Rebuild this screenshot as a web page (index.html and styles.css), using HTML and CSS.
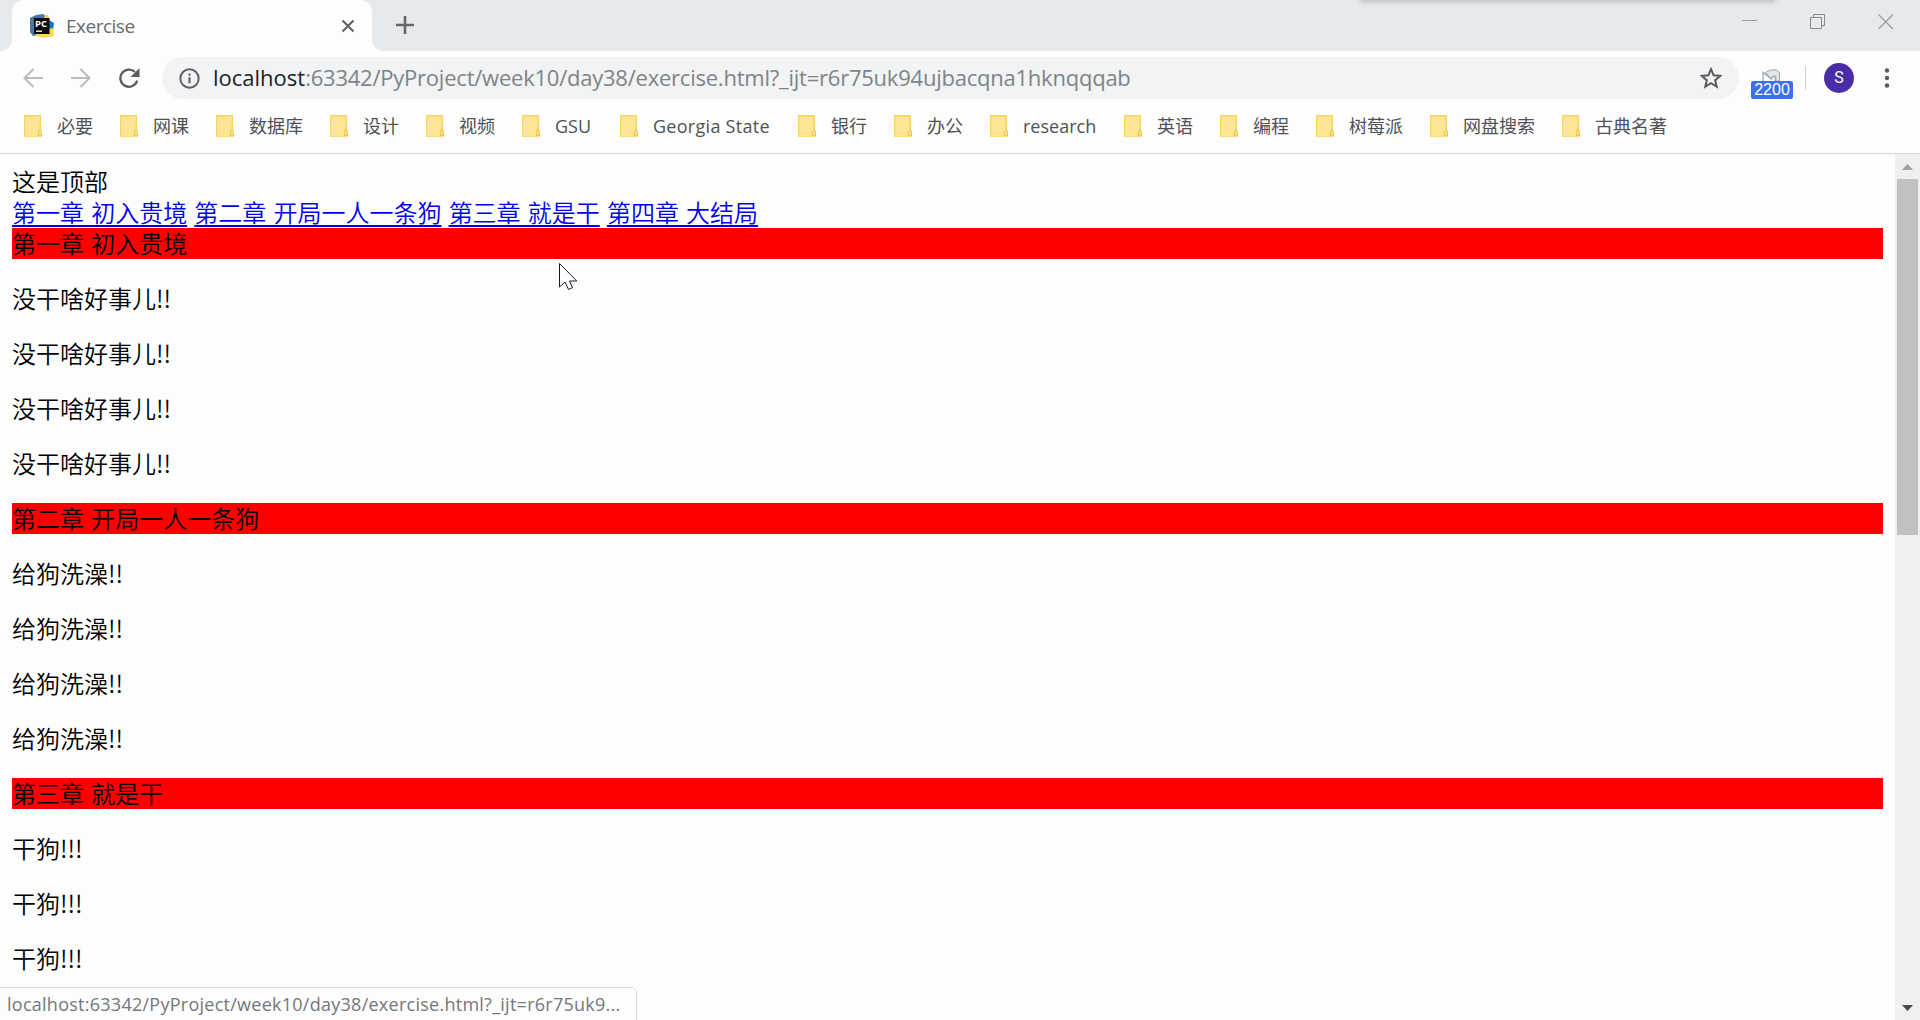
FILE: index.html
```html
<!DOCTYPE html>
<html lang="zh-CN">
<head>
<meta charset="utf-8">
<title>Exercise</title>
<link rel="stylesheet" href="styles.css">
</head>
<body>
<div class="browser">
  <header class="tabstrip">
    <div class="tab">
      <svg class="favicon" viewBox="0 0 24 24" width="24" height="24">
        <path d="M0 4L6 1L13 0L17 3L20 9L14 20L3 22L0 18Z" fill="#4a78a5"/>
        <path d="M14 3L18 0L19 5L15 7Z" fill="#f9d24c"/>
        <path d="M19 6L24 9L23 17L18 18Z" fill="#0c78c8"/>
        <path d="M18 15L23 14L24 22L14 24L6 22L5 19Z" fill="#fcd84a"/>
        <rect x="4" y="4" width="15.500" height="16" fill="#0b0b0d"/>
        <path d="M6 17.200h6" stroke="#fff" stroke-width="1.3"/>
        <text class="favicon-text" x="5" y="12.800">PC</text>
      </svg>
      <span class="tab-title">Exercise</span>
      <svg class="tab-close" viewBox="0 0 14 14" width="14" height="14"><path d="M1.5 1.5L12.5 12.5M12.5 1.5L1.5 12.5" stroke="#5f6068" stroke-width="2"/></svg>
    </div>
    <svg class="new-tab" viewBox="0 0 18 18" width="18" height="18"><path d="M9 0V18M0 9H18" stroke="#67676c" stroke-width="2.6"/></svg>
    <div class="window-controls">
      <svg viewBox="0 0 16 16" width="16" height="16"><path d="M0 6.5H15" stroke="#9a9a9a"/></svg>
      <svg viewBox="0 0 16 16" width="16" height="16" fill="none" stroke="#8a8a8a"><path d="M.5 3.5H11.500V14.500H.5ZM3.500 3.500V.5H14.500V11.500H11.500"/></svg>
      <svg viewBox="0 0 16 16" width="16" height="16"><path d="M.5 .5L15 15M15 .5L.5 15" stroke="#9a9a9a" stroke-width="1.1"/></svg>
    </div>
    <div class="top-shadow"></div>
  </header>
  <nav class="toolbar">
    <svg class="nav-icon" viewBox="0 0 20 20" width="20" height="20" fill="none" stroke="#bcbcbe" stroke-width="2.100"><path d="M20 10H1.500M10.500 1L1.500 10L10.500 19"/></svg>
    <svg class="nav-icon" viewBox="0 0 20 20" width="20" height="20" fill="none" stroke="#bcbcbe" stroke-width="2.100"><path d="M0 10H18.500M9.500 1L18.500 10L9.500 19"/></svg>
    <svg class="nav-icon reload" viewBox="0 0 22 20" width="22" height="20"><path d="M18.200 12.700A8.600 8.600 0 1 1 16 4" fill="none" stroke="#5b5b60" stroke-width="2.300"/><path d="M20.500 0V9H11.500Z" fill="#5b5b60"/></svg>
    <div class="omnibox">
      <svg viewBox="0 0 22 22" width="21" height="21"><circle cx="11" cy="11" r="9.600" fill="none" stroke="#5f6068" stroke-width="2.100"/><path d="M11 9.800V16M11 5.800V8" stroke="#5f6068" stroke-width="2.200"/></svg>
      <span class="url"><span class="host">localhost</span>:63342/PyProject/week10/day38/exercise.html?_ijt=r6r75uk94ujbacqna1hknqqqab</span>
      <svg class="star" viewBox="0 0 22 22" width="22" height="22"><path d="M11 2.200L13.600 8.300L20.200 8.900L15.200 13.200L16.700 19.700L11 16.200L5.300 19.700L6.800 13.200L1.800 8.900L8.400 8.300Z" fill="none" stroke="#5b5b60" stroke-width="2"/></svg>
    </div>
    <div class="extension">
      <svg viewBox="0 0 20 12" width="20" height="12"><path d="M3.500 3.500C8 0 17.500-.5 17.500 5V12H13C14 7 12 5.500 9 9.500Z" fill="#e3e8ea" stroke="#97a1a5"/><path d="M1 12V3.500L9.500 10C12 5.500 15 6 13.500 12" fill="none" stroke="#9aa3a6" stroke-width="1.200"/></svg>
      <span class="badge">2200</span>
    </div>
    <div class="divider"></div>
    <div class="avatar">S</div>
    <svg class="menu" viewBox="0 0 6 20" width="6" height="20" fill="#5b5b60"><circle cx="3" cy="2.500" r="2.200"/><circle cx="3" cy="10" r="2.200"/><circle cx="3" cy="17.500" r="2.200"/></svg>
  </nav>
  <svg class="defs" width="0" height="0"><defs><symbol id="folder" viewBox="0 0 18 22"><rect width="17" height="22" fill="#ffe594"/><path d="M.5 22V.8H16.300V15" fill="none" stroke="#f5d467" stroke-width="1.500"/><path d="M0 21.300H18" stroke="#f7dc7d" stroke-width="1.300"/><path d="M14.500 20.500V16.500Q16 13.500 17.500 16.500V20.500Z" fill="#ffe594" stroke="#ebc74e" stroke-width="1.100"/></symbol></defs></svg>
  <nav class="bookmarks">
    <div class="bookmark"><svg><use href="#folder"/></svg><span>必要</span></div>
    <div class="bookmark"><svg><use href="#folder"/></svg><span>网课</span></div>
    <div class="bookmark"><svg><use href="#folder"/></svg><span>数据库</span></div>
    <div class="bookmark"><svg><use href="#folder"/></svg><span>设计</span></div>
    <div class="bookmark"><svg><use href="#folder"/></svg><span>视频</span></div>
    <div class="bookmark"><svg><use href="#folder"/></svg><span class="gsu">GSU</span></div>
    <div class="bookmark"><svg><use href="#folder"/></svg><span class="georgia">Georgia State</span></div>
    <div class="bookmark"><svg><use href="#folder"/></svg><span>银行</span></div>
    <div class="bookmark"><svg><use href="#folder"/></svg><span>办公</span></div>
    <div class="bookmark"><svg><use href="#folder"/></svg><span class="research">research</span></div>
    <div class="bookmark"><svg><use href="#folder"/></svg><span>英语</span></div>
    <div class="bookmark"><svg><use href="#folder"/></svg><span>编程</span></div>
    <div class="bookmark"><svg><use href="#folder"/></svg><span>树莓派</span></div>
    <div class="bookmark"><svg><use href="#folder"/></svg><span>网盘搜索</span></div>
    <div class="bookmark"><svg><use href="#folder"/></svg><span>古典名著</span></div>
  </nav>
  <div class="viewport">
    <main class="page">
      <div class="line">这是顶部</div>
      <div class="line"><a href="#c1">第一章 初入贵境</a> <a href="#c2">第二章 开局一人一条狗</a> <a href="#c3">第三章 就是干</a> <a href="#c4">第四章 大结局</a></div>
      <div class="line chapter" id="c1">第一章 初入贵境</div>
      <p class="line">没干啥好事儿!!</p>
      <p class="line">没干啥好事儿!!</p>
      <p class="line">没干啥好事儿!!</p>
      <p class="line">没干啥好事儿!!</p>
      <div class="line chapter" id="c2">第二章 开局一人一条狗</div>
      <p class="line">给狗洗澡!!</p>
      <p class="line">给狗洗澡!!</p>
      <p class="line">给狗洗澡!!</p>
      <p class="line">给狗洗澡!!</p>
      <div class="line chapter" id="c3">第三章 就是干</div>
      <p class="line">干狗!!!</p>
      <p class="line">干狗!!!</p>
      <p class="line">干狗!!!</p>
    </main>
    <div class="scrollbar">
      <svg viewBox="0 0 11 6" width="11" height="6"><path d="M0 6L5.500 0L11 6Z" fill="#a0a0a0"/></svg>
      <div class="thumb"></div>
      <svg class="down" viewBox="0 0 11 6" width="11" height="6"><path d="M0 0L5.500 6L11 0Z" fill="#524550"/></svg>
    </div>
  </div>
  <div class="status">localhost:63342/PyProject/week10/day38/exercise.html?_ijt=r6r75uk9...</div>
  <svg class="cursor" viewBox="0 0 18 27" width="18" height="27"><path d="M.5 .5V24L6 19L9.500 26.500L13.500 24.500L10.500 18H17.700Z" fill="#fff" stroke="#17172b"/></svg>
</div>
</body>
</html>
```
FILE: styles.css
```css
* { box-sizing: border-box; }
body { margin: 0; background: #fdfdfd; }
svg { display: block; flex: none; }
.browser {
  position: relative;
  display: flex;
  flex-direction: column;
  width: 1920px;
  height: 1020px;
  overflow: hidden;
  background: #fdfdfd;
  font-family: "Open Sans", "Noto Sans CJK SC", sans-serif;
}
.tabstrip {
  position: relative;
  display: flex;
  height: 51px;
  padding-left: 12px;
  background: #e6eaed;
}
.tab {
  position: relative;
  display: flex;
  align-items: center;
  width: 360px;
  padding: 0 18px 0 18px;
  background: #fdfdfd;
  border-radius: 12px 12px 0 0;
}
.tab::before, .tab::after {
  content: "";
  position: absolute;
  bottom: 0;
  width: 12px;
  height: 12px;
}
.tab::before { left: -12px; background: radial-gradient(circle at 0 0, #e6eaed 11.5px, #fdfdfd 12.5px); }
.tab::after { right: -12px; background: radial-gradient(circle at 100% 0, #e6eaed 11.5px, #fdfdfd 12.5px); }
.favicon-text { font: bold 9.5px "Open Sans", sans-serif; fill: #fff; }
.tab-title {
  flex: 1;
  margin-left: 12px;
  color: #686b70;
  font-size: 19px;
  letter-spacing: -0.5px;
}
.tab-close { margin-right: -1px; }
.new-tab { margin: 16px 0 0 24px; }
.window-controls {
  display: flex;
  gap: 52px;
  margin: 14px 26px 0 auto;
}
.top-shadow {
  position: absolute;
  top: -4px;
  left: 1361px;
  width: 413px;
  height: 5px;
  background: #c9cbd0;
  box-shadow: 0 0 5px 1px #bbbdc2;
}
.toolbar {
  display: flex;
  align-items: center;
  height: 54px;
  padding-left: 23px;
}
.nav-icon { margin-right: 28px; }
.nav-icon.reload { margin-right: 21px; }
.omnibox {
  display: flex;
  align-items: center;
  width: 1577px;
  height: 42px;
  padding: 0 17px;
  border-radius: 21px;
  background: #f1f3f4;
}
.url {
  flex: 1;
  margin-left: 13px;
  padding-bottom: 2px;
  color: #808387;
  font-size: 22px;
  line-height: 30px;
  letter-spacing: -0.23px;
  white-space: nowrap;
}
.host { color: #202128; letter-spacing: 0; }
.extension {
  display: flex;
  flex-direction: column;
  align-items: center;
  width: 42px;
  margin-left: 12px;
  padding-top: 12px;
}
.badge {
  width: 42px;
  height: 18px;
  border-radius: 2px;
  background: #3d6ff0;
  color: #fff;
  font: 16px/18px "Liberation Sans", sans-serif;
  text-align: center;
}
.divider { width: 1px; height: 24px; margin-left: 12px; background: #cfd0d3; }
.avatar {
  width: 30px;
  height: 30px;
  margin-left: 18px;
  border-radius: 50%;
  background: #4b2ca8;
  color: #fff;
  font: 16px/30px Roboto, sans-serif;
  text-align: center;
}
.menu { margin-left: 30px; }
.defs { position: absolute; }
.bookmarks {
  display: flex;
  gap: 27px;
  height: 49px;
  padding: 10px 0 0 24px;
  border-bottom: 1px solid #d4d5d6;
  color: #505156;
  font-size: 18px;
  line-height: 23px;
}
.bookmark { display: flex; gap: 15px; white-space: nowrap; }
.bookmark svg { width: 18px; height: 22px; }
.bookmark span { height: 23px; }
.gsu { width: 38px; }
.georgia { width: 118px; letter-spacing: 0.28px; }
.research { width: 74px; }
.viewport { display: flex; flex: 1; min-height: 0; }
.page {
  flex: 1;
  padding: 12px;
  overflow: hidden;
  color: #000;
  font: 350 24px/29px "Noto Sans CJK SC", sans-serif;
  word-spacing: 1.800px;
}
.line { margin: 0; padding-bottom: 2px; }
p.line { margin: 24px 0; }
.page a { color: #0000ee; text-decoration-thickness: 2px; text-underline-offset: 3px; text-decoration-skip-ink: none; }
.chapter { background: #f00; }
.scrollbar {
  display: flex;
  flex-direction: column;
  align-items: center;
  width: 25px;
  padding: 10px 0 9px;
  background: #efefef;
}
.thumb { width: 21px; height: 356px; margin-top: 9px; background: #c1c1c1; }
.down { margin-top: auto; }
.status {
  position: absolute;
  left: -1px;
  bottom: -1px;
  width: 638px;
  height: 34px;
  padding-left: 7px;
  border: 1px solid #d9dadb;
  border-top-right-radius: 6px;
  background: #fdfdfd;
  color: #74777b;
  font-size: 18px;
  line-height: 33px;
  letter-spacing: 0.26px;
  white-space: nowrap;
}
.cursor { position: absolute; left: 559px; top: 263px; }
```
